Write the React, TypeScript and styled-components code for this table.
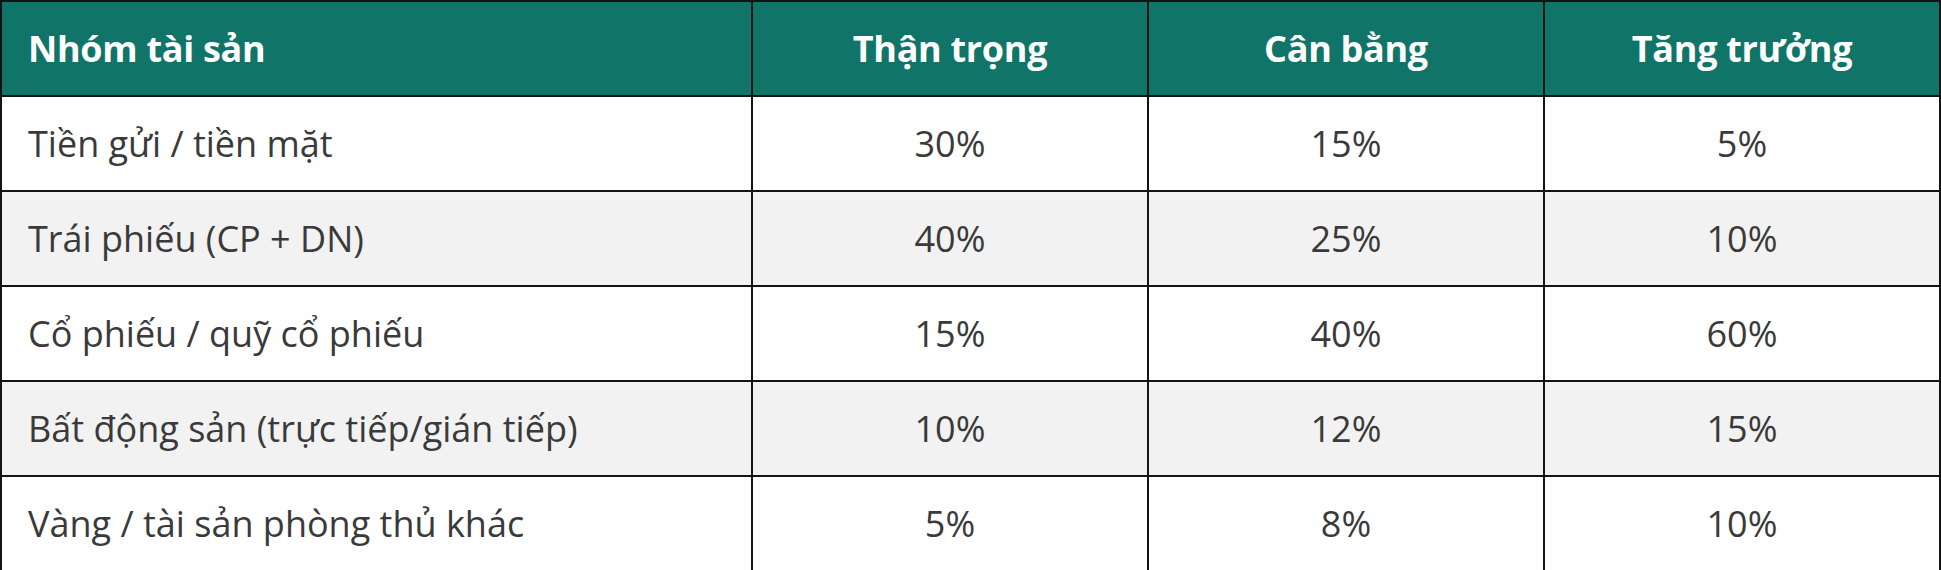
import React from 'react';
import styled, { createGlobalStyle } from 'styled-components';

const GlobalStyle = createGlobalStyle`
  html, body {
    margin: 0;
    padding: 0;
    background: #ffffff;
  }
`;

const Table = styled.table`
  width: 1941px;
  height: 570px;
  border-collapse: collapse;
  table-layout: fixed;
  font-family: 'Open Sans', 'Noto Sans', sans-serif;
  font-size: 36px;
  color: #3a3a3a;
  border: 2px solid #141414;
`;

const HeadCell = styled.th<{ $first?: boolean }>`
  height: 93px;
  background: #107468;
  color: #ffffff;
  font-size: 36px;
  font-weight: 700;
  letter-spacing: -0.3px;
  text-align: ${(p) => (p.$first ? 'left' : 'center')};
  padding: 0 0 0 ${(p) => (p.$first ? '26px' : '0')};
  border: 2px solid #141414;
`;

const Row = styled.tr<{ $shade: boolean }>`
  background: ${(p) => (p.$shade ? '#f2f2f3' : '#ffffff')};
`;

const Cell = styled.td<{ $first?: boolean }>`
  height: 93px;
  text-align: ${(p) => (p.$first ? 'left' : 'center')};
  padding: 0 0 0 ${(p) => (p.$first ? '26px' : '0')};
  border: 2px solid #141414;
`;

const rows = [
  ['Tiền gửi / tiền mặt', '30%', '15%', '5%'],
  ['Trái phiếu (CP + DN)', '40%', '25%', '10%'],
  ['Cổ phiếu / quỹ cổ phiếu', '15%', '40%', '60%'],
  ['Bất động sản (trực tiếp/gián tiếp)', '10%', '12%', '15%'],
  ['Vàng / tài sản phòng thủ khác', '5%', '8%', '10%'],
];

export default function App() {
  return (
    <>
      <GlobalStyle />
      <Table>
        <colgroup>
          <col style={{ width: 751 }} />
          <col style={{ width: 396 }} />
          <col style={{ width: 396 }} />
          <col />
        </colgroup>
        <thead>
          <tr>
            <HeadCell $first>Nhóm tài sản</HeadCell>
            <HeadCell>Thận trọng</HeadCell>
            <HeadCell>Cân bằng</HeadCell>
            <HeadCell>Tăng trưởng</HeadCell>
          </tr>
        </thead>
        <tbody>
          {rows.map((r, i) => (
            <Row key={r[0]} $shade={i % 2 === 1}>
              {r.map((c, j) => (
                <Cell key={j} $first={j === 0}>
                  {c}
                </Cell>
              ))}
            </Row>
          ))}
        </tbody>
      </Table>
    </>
  );
}
